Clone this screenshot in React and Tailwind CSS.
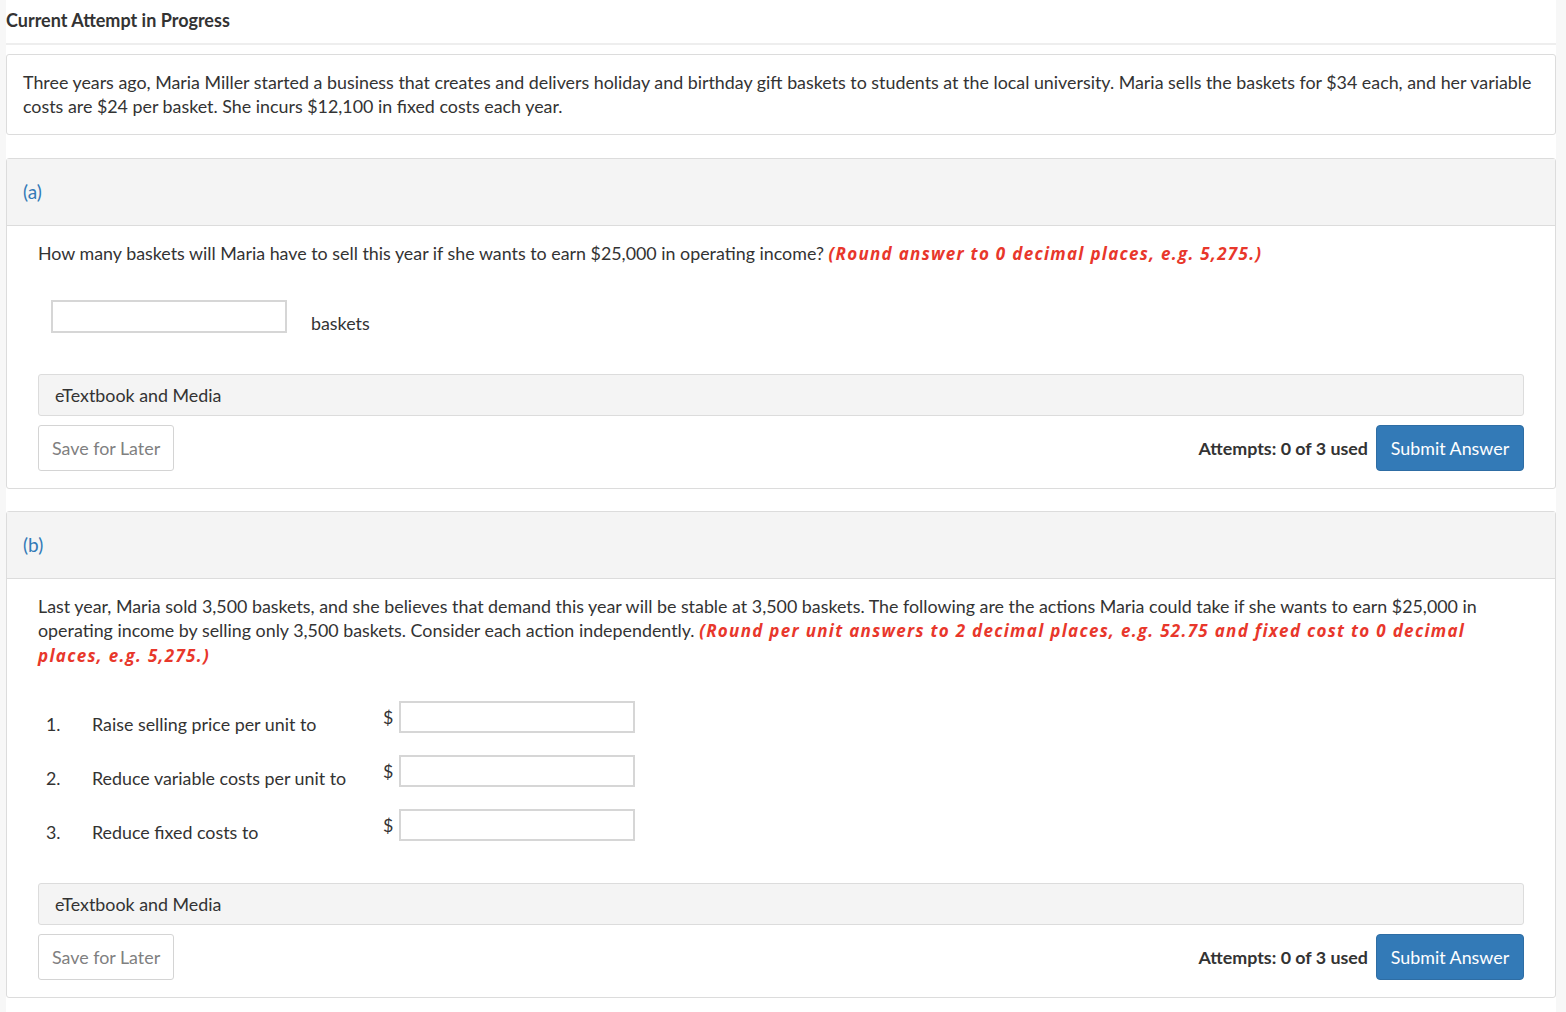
import React from 'react';

const red = 'font-bold italic text-[#e8372b] tracking-[1.3px] text-[17px]';
const redFont = { fontFamily: '"Open Sans", Lato, sans-serif' };

function Buttons() {
  return (
    <div className="flex items-center justify-between mt-[9px]">
      <button className="h-[46px] px-[13px] border border-[#d4d4d4] rounded-[3px] bg-white text-[#808080]">
        Save for Later
      </button>
      <div className="flex items-center gap-[8px]">
        <span className="font-bold text-[#333]">Attempts: 0 of 3 used</span>
        <button className="h-[46px] w-[148px] rounded-[4px] bg-[#337ab7] border border-[#2e6da4] text-white">
          Submit Answer
        </button>
      </div>
    </div>
  );
}

function Media() {
  return (
    <div className="h-[42px] flex items-center px-[16px] bg-[#f4f4f4] border border-[#dcdcdc] rounded-[3px] text-[#333]">
      eTextbook and Media
    </div>
  );
}

function Part({ label, children }) {
  return (
    <div className="border border-[#dcdcdc] rounded-[3px]">
      <div className="h-[67px] flex items-center px-[16px] bg-[#f4f4f4] border-b border-[#dcdcdc] text-[#337ab7] text-[19px]">
        {label}
      </div>
      <div className="px-[31px] pb-[17px]">{children}</div>
    </div>
  );
}

function Row({ n, text }) {
  return (
    <div className="flex items-start h-[54px]">
      <span className="w-[54px] pl-[8px] pt-[11px] leading-[24px]">{n}.</span>
      <span className="w-[291px] pt-[11px] leading-[24px]">{text}</span>
      <span className="w-[16px] pt-[4px] leading-[24px]">$</span>
      <input className="w-[236px] h-[32px] border-2 border-[#d6d6d6] outline-none" />
    </div>
  );
}

export default function App() {
  return (
    <div className="flex min-h-[1012px] text-[#333] text-[17.85px]" style={{ fontFamily: 'Lato, "Open Sans", sans-serif' }}>
      <div className="w-[6px] bg-[#f7f7f7]" />
      <div className="flex-1 bg-white">
        <div className="h-[45px] pt-[7px] border-b-2 border-[#eeeeee] font-bold text-[18px] text-[#333]">
          Current Attempt in Progress
        </div>
        <div className="mt-[9px] border border-[#dcdcdc] rounded-[3px] px-[16px] pt-[15px] pb-[16px] leading-[24px]">
          Three years ago, Maria Miller started a business that creates and delivers holiday and birthday gift baskets to students at the local university. Maria sells the baskets for $34 each, and her variable costs are $24 per basket. She incurs $12,100 in fixed costs each year.
        </div>

        <div className="mt-[23px]">
          <Part label="(a)">
            <p className="mt-[15px] leading-[24px]">
              How many baskets will Maria have to sell this year if she wants to earn $25,000 in operating income?{' '}
              <span className={red} style={redFont}>(Round answer to 0 decimal places, e.g. 5,275.)</span>
            </p>
            <div className="flex items-start mt-[34px] ml-[13px]">
              <input className="w-[236px] h-[33px] border-2 border-[#d6d6d6] outline-none" />
              <span className="ml-[24px] pt-[11px] leading-[24px]">baskets</span>
            </div>
            <div className="mt-[39px]">
              <Media />
            </div>
            <Buttons />
          </Part>
        </div>

        <div className="mt-[22px]">
          <Part label="(b)">
            <p className="mt-[15px] leading-[24px]">
              Last year, Maria sold 3,500 baskets, and she believes that demand this year will be stable at 3,500 baskets. The following are the actions Maria could take if she wants to earn $25,000 in operating income by selling only 3,500 baskets. Consider each action independently.{' '}
              <span className={red} style={redFont}>(Round per unit answers to 2 decimal places, e.g. 52.75 and fixed cost to 0 decimal places, e.g. 5,275.)</span>
            </p>
            <div className="mt-[33px]">
              <Row n="1" text="Raise selling price per unit to" />
              <Row n="2" text="Reduce variable costs per unit to" />
              <Row n="3" text="Reduce fixed costs to" />
            </div>
            <div className="mt-[20px]">
              <Media />
            </div>
            <Buttons />
          </Part>
        </div>
      </div>
      <div className="w-[10px] bg-[#f7f7f7]" />
    </div>
  );
}
